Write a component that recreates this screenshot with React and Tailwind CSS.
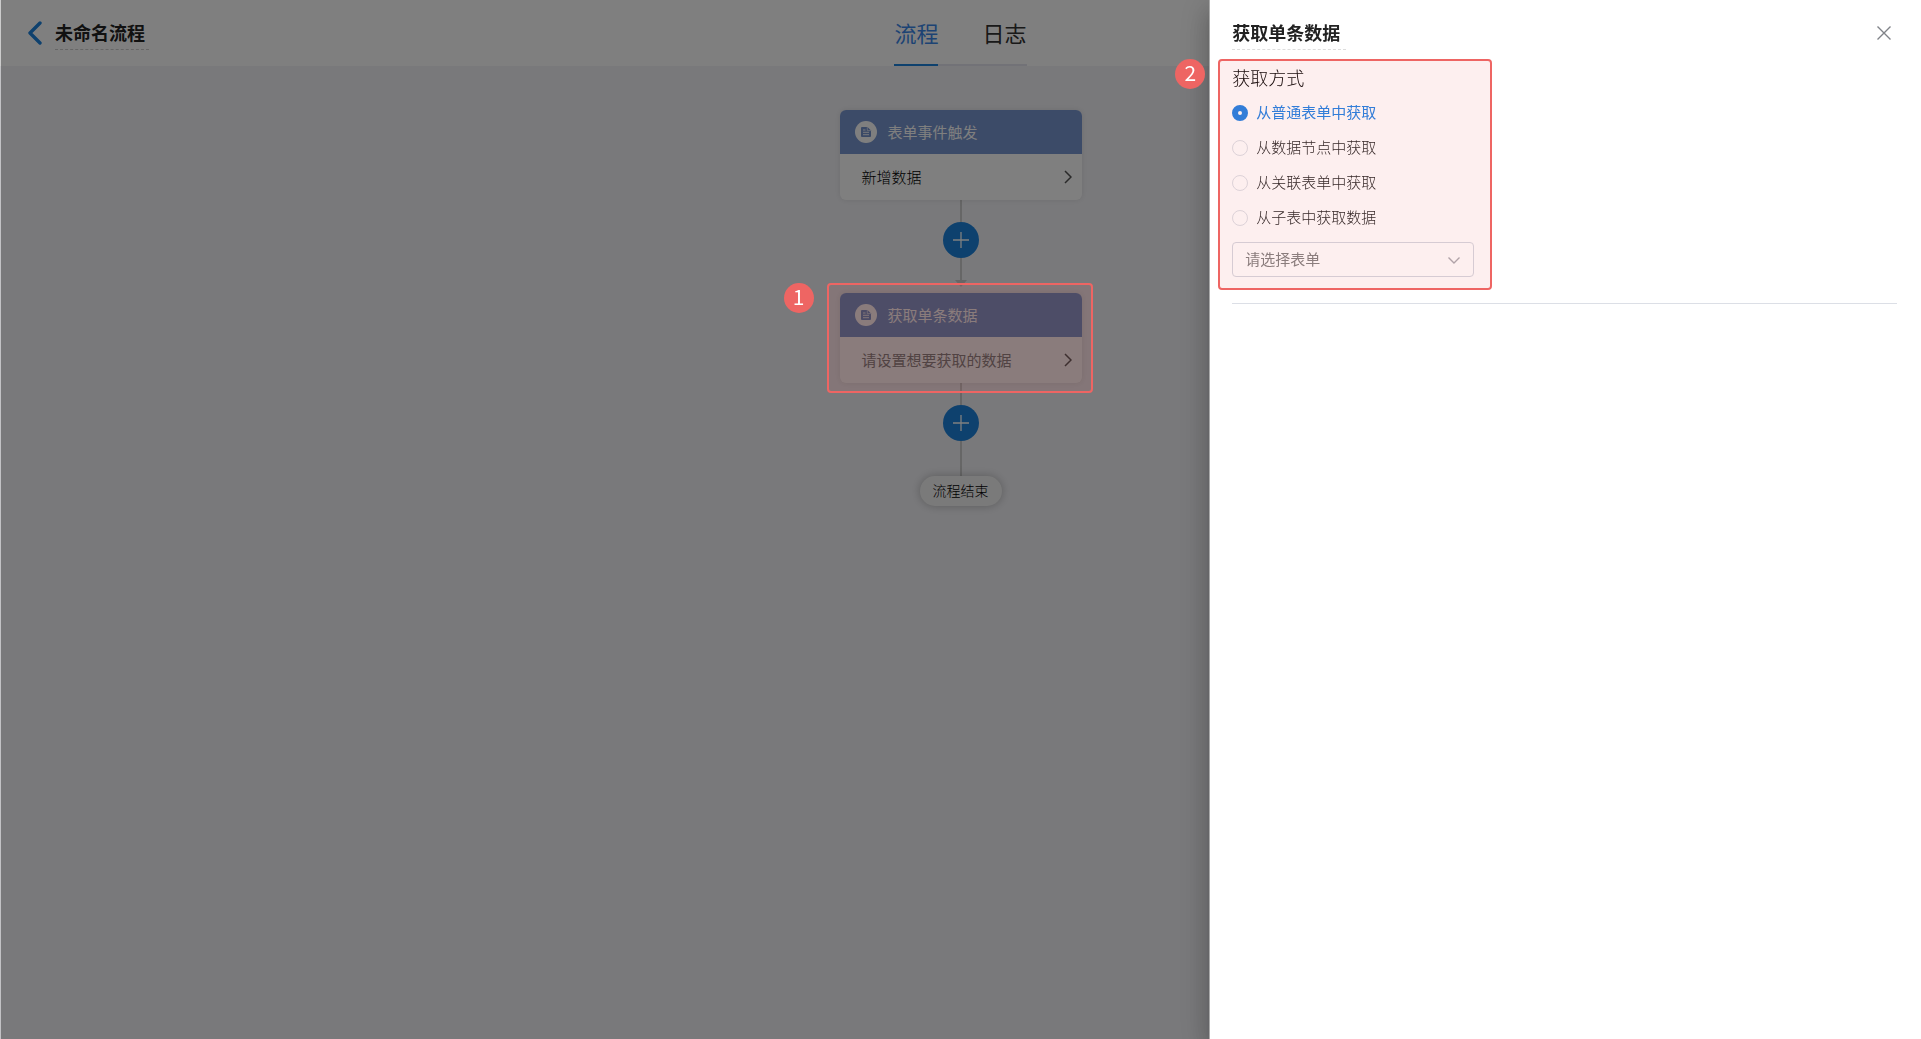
import React, { useState } from 'react';

const sources = [
    { id: 'form', label: '从普通表单中获取' },
    { id: 'node', label: '从数据节点中获取' },
    { id: 'linked', label: '从关联表单中获取' },
    { id: 'subtable', label: '从子表中获取数据' },
];

const DocIcon = () => (
    <span className="flex size-[22px] items-center justify-center rounded-full bg-white">
        <svg width="12" height="12" viewBox="0 0 12 12" aria-hidden="true">
            <path d="M2 1h5.5L11 4.5V10a1 1 0 0 1-1 1H2a1 1 0 0 1-1-1V2a1 1 0 0 1 1-1z" fill="#7592cc" />
            <path d="M3 4h2.5M3 6.3h6M3 8.7h6" fill="none" stroke="#fff" strokeWidth="0.9" />
            <path d="M7.3 1v3.6H11" fill="none" stroke="#fff" strokeWidth="0.6" />
        </svg>
    </span>
);

const Badge = ({ children, className }) => (
    <span
        className={`pointer-events-none absolute z-30 flex size-[30px] justify-center rounded-full bg-[#ee6563] text-[21px] leading-[26px] text-white ${className}`}
    >
        {children}
    </span>
);

const Highlight = ({ className }) => (
    <span
        className={`pointer-events-none absolute z-20 rounded border-2 border-[#ee6563] bg-[#ee6563]/10 ${className}`}
    />
);

const FlowNode = ({ title, text, muted, children }) => (
    <div className="relative w-[242px]">
        <div className="overflow-hidden rounded-md bg-white shadow-[0_0_6px_rgba(0,0,0,0.1)]">
            <div className="flex h-11 items-center gap-[11px] bg-[#7896d0] pl-[15px] text-[15px] text-white">
                <DocIcon />
                <span>{title}</span>
            </div>
            <button type="button" className="flex h-[46px] w-full items-center justify-between pr-2.5 pl-[22px] text-[15px]">
                <span className={muted ? 'text-[#808080]' : 'font-light text-black'}>{text}</span>
                <svg width="8" height="14" viewBox="0 0 8 14" fill="none" stroke="#555" strokeWidth="1.5" aria-hidden="true">
                    <path d="M1 1l6 6-6 6" />
                </svg>
            </button>
        </div>
        {children}
    </div>
);

const AddStep = ({ arrow }) => (
    <div className="flex h-[93px] flex-col items-center">
        <span className="h-[22px] w-0.5 bg-[#ccc]" />
        <button
            type="button"
            aria-label="添加节点"
            className="flex size-9 shrink-0 items-center justify-center rounded-full bg-[#1c82dc]"
        >
            <svg width="16" height="16" viewBox="0 0 16 16" stroke="#fff" strokeWidth="1.3" aria-hidden="true">
                <path d="M8 0v16M0 8h16" />
            </svg>
        </button>
        <span className={arrow ? 'h-[22px] w-0.5 bg-[#ccc]' : 'w-0.5 flex-1 bg-[#ccc]'} />
        {arrow && (
            <svg width="12" height="7" viewBox="0 0 12 7" fill="#ccc" aria-hidden="true">
                <path d="M0 0h12L6 7z" />
            </svg>
        )}
    </div>
);

const Header = () => (
    <header className="grid h-[66px] shrink-0 grid-cols-3 bg-white">
        <div className="flex items-center gap-[13px] pl-7">
            <button type="button" aria-label="返回">
                <svg width="14" height="24" viewBox="0 0 14 24" fill="none" stroke="#1c82dc" strokeWidth="3.4" strokeLinecap="round" strokeLinejoin="round" aria-hidden="true">
                    <path d="M12 2L2 12l10 10" />
                </svg>
            </button>
            <h1 className="border-b border-dashed border-[#ccc] pt-px pr-1 pb-0.5 text-[18px] leading-[30px] font-bold text-[#222]">
                未命名流程
            </h1>
        </div>
        <nav className="flex justify-center text-[22px]">
            <a href="#flow" className="border-b-2 border-[#1c82dc] pt-0.5 leading-[60px] text-[#3a86e8]">
                流程
            </a>
            <span className="w-11 border-b-2 border-[#e4e4ee]" />
            <a href="#log" className="border-b-2 border-[#e4e4ee] pt-0.5 leading-[60px] text-[#333]">
                日志
            </a>
        </nav>
    </header>
);

const Drawer = () => {
    const [source, setSource] = useState('form');

    return (
        <aside className="fixed inset-y-0 right-0 z-10 w-[calc(37%+1px)] border-l border-[#aaa] bg-white pr-6 pl-[22px] shadow-[0_8px_10px_-5px_rgba(0,0,0,0.2),0_16px_24px_2px_rgba(0,0,0,0.14),0_6px_30px_5px_rgba(0,0,0,0.12)]">
            <div className="flex h-[59px] items-start justify-between">
                <h2 className="mt-[17px] border-b border-dashed border-[#ddd] pr-1.5 pb-0.5 text-[18px] leading-[30px] font-bold text-[#222]">
                    获取单条数据
                </h2>
                <button type="button" aria-label="关闭" className="mt-[26px] mr-1.5">
                    <svg width="14" height="14" viewBox="0 0 14 14" stroke="#808388" strokeWidth="1.4" aria-hidden="true">
                        <path d="M0.5 0.5l13 13M13.5 0.5l-13 13" />
                    </svg>
                </button>
            </div>
            <div className="relative w-[242px] pb-[13px]">
                <fieldset>
                    <legend className="pt-[3px] pb-[3px] text-[18px] leading-[30px] font-light text-black">获取方式</legend>
                    {sources.map(item => (
                        <label
                            key={item.id}
                            className={`flex h-[35px] items-center gap-2 text-[15px] ${source === item.id ? 'text-[#1e80e6]' : 'font-light text-[#222]'}`}
                        >
                            <input
                                type="radio"
                                name="source"
                                checked={source === item.id}
                                onChange={() => setSource(item.id)}
                                className="size-4 appearance-none rounded-full border border-[#dcdfe6] bg-white checked:border-[6px] checked:border-[#1e80e6]"
                            />
                            {item.label}
                        </label>
                    ))}
                </fieldset>
                <div className="relative mt-[7px]">
                    <select
                        aria-label="请选择表单"
                        className="h-[35px] w-full appearance-none rounded border border-[#d4d7e0] bg-white px-3 text-[15px] text-[#808080]"
                    >
                        <option>请选择表单</option>
                    </select>
                    <svg width="12" height="7" viewBox="0 0 12 7" fill="none" stroke="#aaaab0" strokeWidth="1.4" className="pointer-events-none absolute top-[15px] right-3.5" aria-hidden="true">
                        <path d="M0.5 0.5L6 6l5.5-5.5" />
                    </svg>
                </div>
                <Highlight className="top-0 -right-[18px] bottom-0 -left-[14px]" />
                <Badge className="top-0 -left-[57px]">2</Badge>
            </div>
            <hr className="mt-[13px] border-[#dcdfe6]" />
        </aside>
    );
};

export default function App() {
    return (
        <div className="flex min-h-screen flex-col bg-[#f3f3f7] font-['Noto_Sans_CJK_SC',sans-serif]">
            <Header />
            <main className="flex flex-1 flex-col items-center pt-11">
                <FlowNode title="表单事件触发" text="新增数据" />
                <AddStep arrow />
                <FlowNode title="获取单条数据" text="请设置想要获取的数据" muted>
                    <Highlight className="-inset-y-2.5 -right-[11px] -left-[13px]" />
                    <Badge className="-top-2.5 -left-14">1</Badge>
                </FlowNode>
                <AddStep />
                <div className="flex h-[30px] w-[82px] items-center justify-center rounded-full bg-[#f5f5f5] pb-px text-[14px] font-light text-black shadow-[0_0_10px_rgba(0,0,0,0.25)]">
                    流程结束
                </div>
            </main>
            <div className="fixed inset-0 border-l border-black/20 bg-black/50 bg-clip-padding" />
            <Drawer />
        </div>
    );
}
